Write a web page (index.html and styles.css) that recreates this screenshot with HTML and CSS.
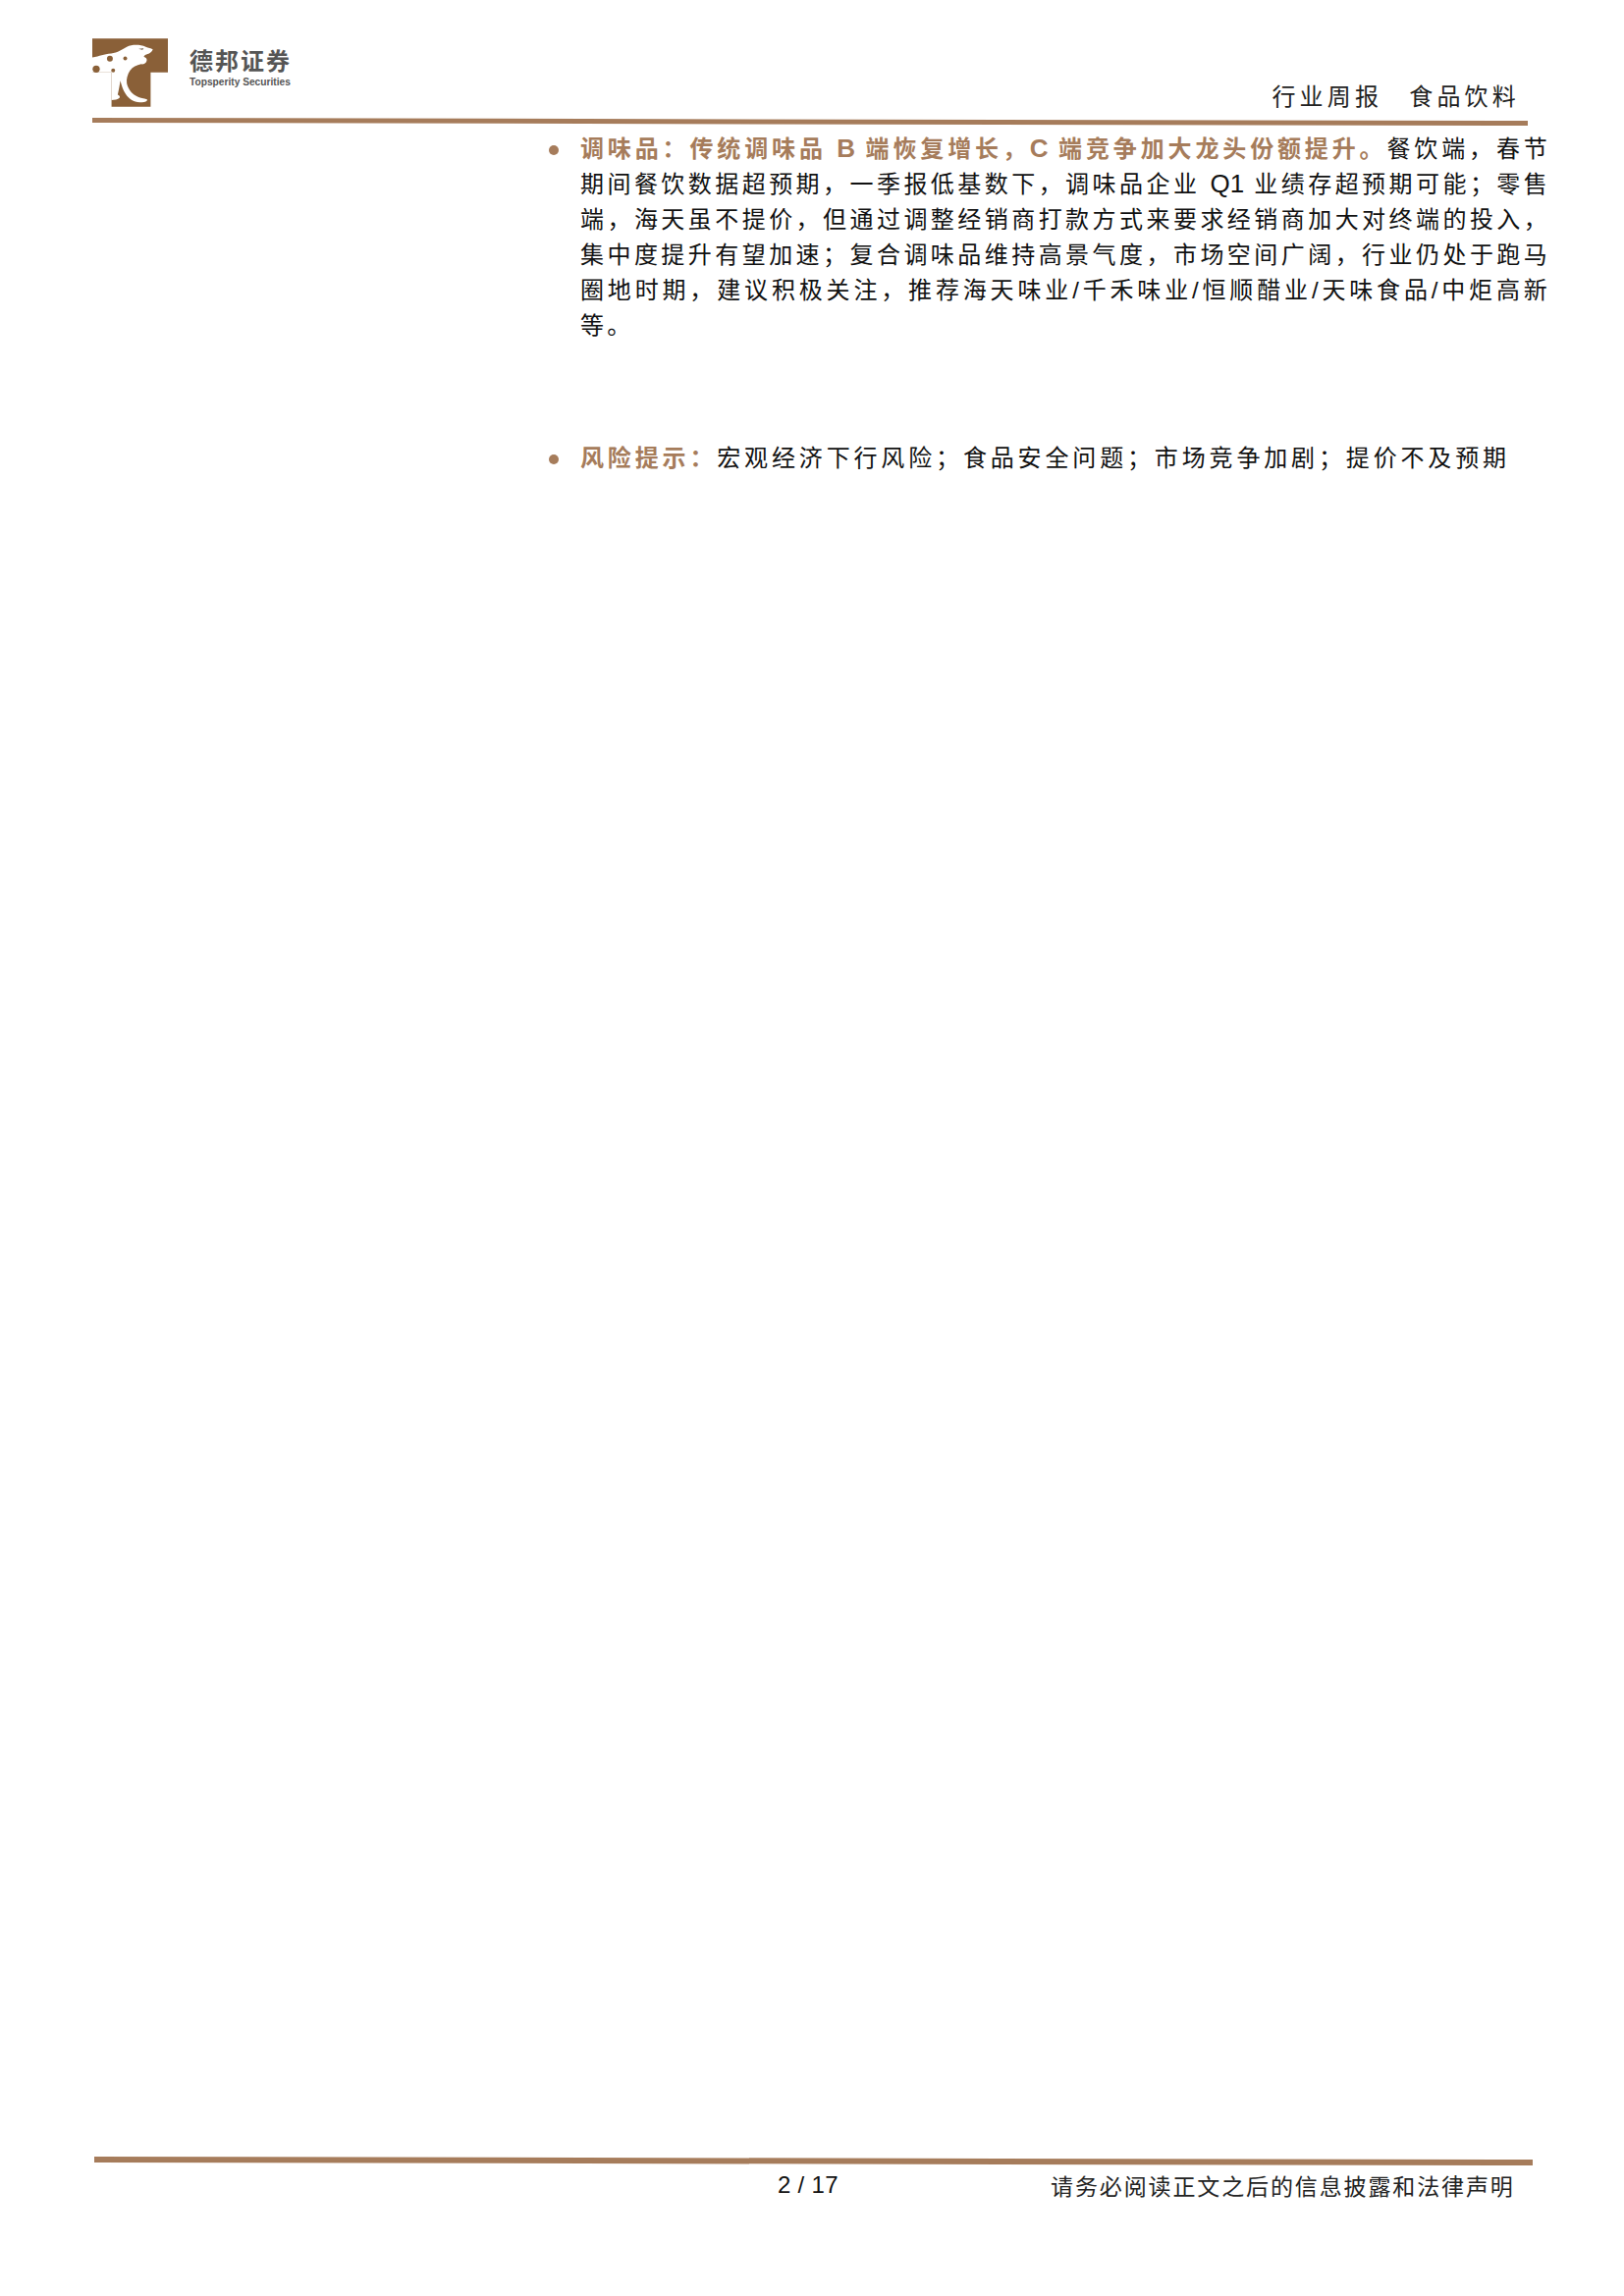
FILE: index.html
```html
<!DOCTYPE html>
<html lang="zh-CN">
<head>
  <meta charset="UTF-8" />
  <title>行业周报 食品饮料</title>
  <link rel="stylesheet" href="styles.css">
</head>
<body>

  <div class="page">
    <header class="page-header">
      <div class="brand">
        <svg class="brand-logo" viewBox="26 26 232 210" aria-hidden="true">
          <path class="logo-brown" d="M26 26H258V130H205V236H85V130H26Z"/>
          <path class="logo-white" d="M26 84C50 80 60 74 84 72C104 70 118 60 132 52C148 44 172 44 190 52C198 55 206 56 212 60C208 68 202 72 196 74C190 76 186 78 184 82C190 84 195 88 193 95C191 102 184 106 176 105C162 108 150 114 142 124C134 136 130 150 132 164C136 182 148 198 168 206C178 210 188 210 195 214C194 221 186 223 172 222C152 221 138 212 128 196C120 184 116 170 112 156C110 170 107 186 104 199C108 201 112 204 110 208C104 214 94 215 85 215V130H26Z"/>
          <circle class="logo-brown" cx="38" cy="120" r="11"/>
          <circle class="logo-brown" cx="80" cy="88" r="9"/>
          <circle class="logo-brown" cx="127" cy="87" r="6"/>
          <circle class="logo-brown" cx="90" cy="124" r="6"/>
          <path class="logo-eye" d="M168 58L184 56L180 62Z"/>
        </svg>
        <div class="brand-text">
          <div class="brand-cn">德邦证券</div>
          <div class="brand-en">Topsperity Securities</div>
        </div>
      </div>
      <div class="report-type"><span>行业周报</span><span>食品饮料</span></div>
    </header>
    <div class="rule rule-top"></div>

    <main class="content">
      <div class="bullet-item">
        <span class="dot"></span>
        <p class="bullet-text">
          <span class="line"><span class="lead">调味品：传统调味品 <span class="latin">B</span> 端恢复增长，<span class="latin">C</span> 端竞争加大龙头份额提升。</span>餐饮端，春节</span>
          <span class="line">期间餐饮数据超预期，一季报低基数下，调味品企业 <span class="latin">Q1</span> 业绩存超预期可能；零售</span>
          <span class="line">端，海天虽不提价，但通过调整经销商打款方式来要求经销商加大对终端的投入，</span>
          <span class="line">集中度提升有望加速；复合调味品维持高景气度，市场空间广阔，行业仍处于跑马</span>
          <span class="line">圈地时期，建议积极关注，推荐海天味业/千禾味业/恒顺醋业/天味食品/中炬高新</span>
          <span class="line line-end">等。</span>
        </p>
      </div>

      <div class="bullet-item risk">
        <span class="dot"></span>
        <p class="bullet-text">
          <span class="line line-end line-loose"><span class="lead">风险提示：</span>宏观经济下行风险；食品安全问题；市场竞争加剧；提价不及预期</span>
        </p>
      </div>
    </main>

    <footer class="page-footer">
      <div class="rule rule-bottom"></div>
      <div class="footer-row">
        <span class="page-num">2 / 17</span>
        <span class="disclaimer">请务必阅读正文之后的信息披露和法律声明</span>
      </div>
    </footer>
  </div>

</body>
</html>
```

FILE: styles.css
```css
* {
  margin: 0;
  padding: 0;
  box-sizing: border-box;
}

html, body {
  background: #fff;
  color: #111;
  font-family: "Liberation Sans", "Noto Sans CJK SC", sans-serif;
}

.page {
  width: 1654px;
  height: 2339px;
  display: flex;
  flex-direction: column;
  overflow: hidden;
}

/* header */
.page-header {
  height: 120px;
  padding: 39px 106px 0 94px;
  display: flex;
  justify-content: space-between;
  align-items: flex-start;
}

.brand {
  display: flex;
  gap: 22px;
}

.brand-logo {
  width: 77px;
  height: 70px;
  display: block;
}

.logo-brown { fill: #8a6038; }
.logo-white { fill: #fff; }
.logo-eye { fill: #8a7a6a; }

.brand-text {
  padding-top: 11px;
  color: #555;
}

.brand-cn {
  font-size: 24px;
  line-height: 26px;
  font-weight: 700;
  letter-spacing: 2px;
}

.brand-en {
  font-size: 10.2px;
  line-height: 12px;
  font-weight: 700;
  margin-top: 2px;
}

.report-type {
  display: flex;
  gap: 27px;
  margin-top: 45px;
  font-size: 24px;
  line-height: 30px;
  letter-spacing: 4.2px;
  color: #222;
}

.rule {
  height: 5px;
  background: #a67c5b;
  transform-origin: left center;
  transform: rotate(0.118deg);
}

.rule-top {
  width: 1462px;
  margin-left: 94px;
}

/* body text */
.content {
  margin: 9px 0 0 559px;
  width: 1020px;
}

.bullet-item {
  display: flex;
}

.risk {
  margin-top: 99px;
}

.dot {
  flex: none;
  width: 10px;
  height: 10px;
  margin: 14px 22px 0 0;
  border-radius: 50%;
  background: #a67c5b;
}

.bullet-text {
  width: 988px;
  font-size: 24px;
  line-height: 36px;
  letter-spacing: 3.2px;
}

.line {
  display: block;
  text-align: justify;
  text-align-last: justify;
  white-space: nowrap;
}

.line-end {
  text-align: left;
  text-align-last: left;
}

.line-loose {
  letter-spacing: 3.85px;
}

.lead {
  color: #a67c5b;
  font-weight: 700;
}

.latin {
  font-size: 26px;
  line-height: 1;
  letter-spacing: 0;
}

/* footer */
.page-footer {
  margin-top: auto;
  padding: 0 0 96px 96px;
}

.rule-bottom {
  width: 1465px;
  height: 6px;
}

.footer-row {
  display: flex;
  height: 34px;
  margin-top: 6px;
  padding-left: 696px;
  align-items: center;
}

.page-num {
  width: 278px;
  font-size: 24px;
  letter-spacing: 0.3px;
}

.disclaimer {
  font-size: 23px;
  letter-spacing: 1.88px;
  color: #222;
}
```
